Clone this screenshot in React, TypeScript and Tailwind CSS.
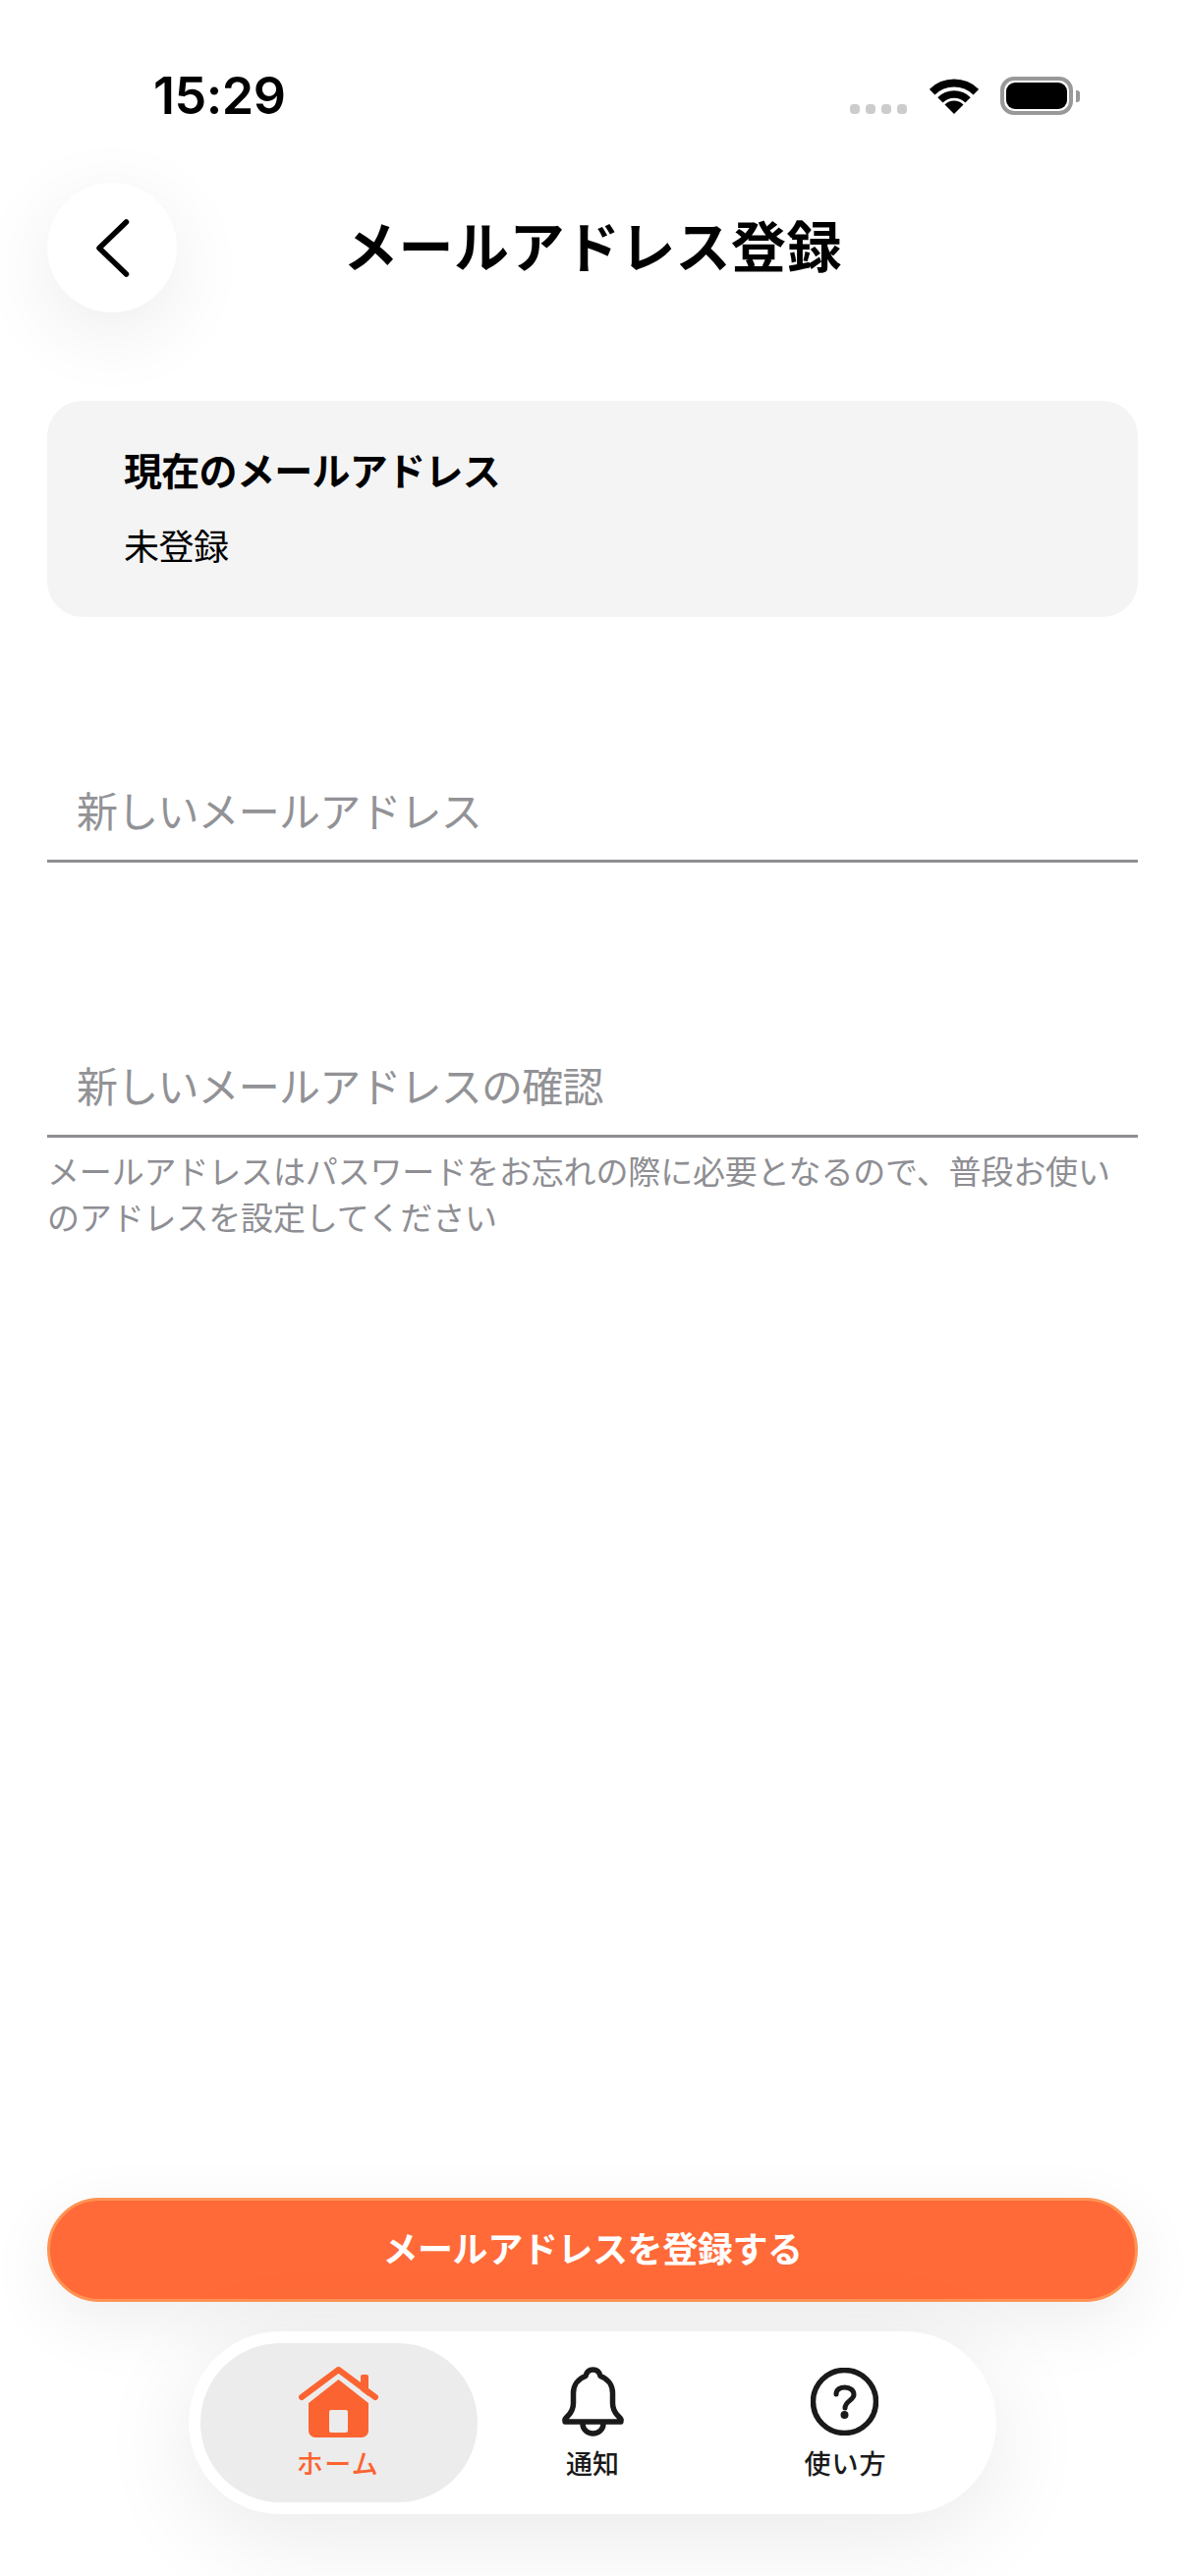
const font = '[font-family:Inter,"Noto_Sans_CJK_JP",sans-serif]';

function StatusBar() {
  return (
    <div className="flex h-[186px] items-start pl-[108px] pr-[59px] pt-[68px]">
      <div className="text-[52px] leading-[60px] font-semibold text-black tracking-[-0.5px]">15:29</div>
      <div className="ml-auto flex h-[39px] mt-[10px] items-end">
        <div className="mb-[1px] flex gap-[6px]">
          <span className="h-[10px] w-[10px] rounded-[4px] bg-[#cccccc]" />
          <span className="h-[10px] w-[10px] rounded-[4px] bg-[#cccccc]" />
          <span className="h-[10px] w-[10px] rounded-[4px] bg-[#cccccc]" />
          <span className="h-[10px] w-[10px] rounded-[4px] bg-[#cccccc]" />
        </div>
        <svg className="ml-[23px] mb-[1px]" width="50" height="37" viewBox="0 0 50 37">
          <path d="M2.6 14.7A32 32 0 0 1 47.4 14.7" fill="none" stroke="#000" strokeWidth="8" />
          <path d="M10.9 22.9A20 20 0 0 1 39.1 22.9" fill="none" stroke="#000" strokeWidth="7.5" />
          <path d="M25 37L15.5 27.5A13.4 13.4 0 0 1 34.5 27.5Z" fill="#000" />
        </svg>
        <div className="ml-[22px] flex items-center">
          <div className="flex h-[39px] w-[74px] items-center justify-center rounded-[14px] border-[4px] border-[#999999]">
            <div className="h-[27px] w-[62px] rounded-[9px] bg-black" />
          </div>
          <div className="ml-[3px] h-[12px] w-[4px] rounded-r-[3px] bg-[#999999]" />
        </div>
      </div>
    </div>
  );
}

function HomeIcon() {
  return (
    <svg width="81" height="72" viewBox="0 0 81 72">
      <path d="M63 24V10a2 2 0 0 1 2-2h4a2 2 0 0 1 2 2v20Z" fill="#fb6431" />
      <path d="M3 31L40.5 3L78 31" fill="none" stroke="#fb6431" strokeWidth="6" strokeLinecap="round" strokeLinejoin="round" />
      <path d="M40.5 13L71 37V65a7 7 0 0 1-7 7H17a7 7 0 0 1-7-7V37Z" fill="#fb6431" />
      <rect x="31" y="44" width="19" height="23" rx="2" fill="#ececec" />
    </svg>
  );
}

function BellIcon() {
  return (
    <svg width="65" height="71" viewBox="0 0 65 71" fill="none" stroke="#1a1a1a" strokeWidth="5.5" strokeLinejoin="round" strokeLinecap="round">
      <path d="M4 56C3 54 4.500 52.500 7 50C10 47 12.500 43 12.500 37V27C12.500 18 18 12 25 9.500C26 5 29 3 32.500 3C36 3 39 5 40 9.500C47 12 52.500 18 52.500 27V37C52.500 43 55 47 58 50C60.500 52.500 62 54 61 56Z" />
      <path d="M22 58C22 64 27 68 32.500 68C38 68 43 64 43 58" />
    </svg>
  );
}

function HelpIcon() {
  return (
    <svg width="69" height="69" viewBox="0 0 69 69" fill="none" stroke="#1a1a1a">
      <circle cx="34.500" cy="34.500" r="32" strokeWidth="5.500" />
      <path d="M26 27C26 22 30 20 35 20C40 20 44 23 44 27.500C44 33 35 34 35 41" strokeWidth="5" strokeLinecap="round" />
      <circle cx="34.500" cy="48" r="4" fill="#1a1a1a" stroke="none" />
    </svg>
  );
}

function Field({ label, top }: { label: string; top: string }) {
  return (
    <div className={`flex h-[100px] items-center border-b-[3px] border-[#8e8e93] pl-[30px] text-[42px] tracking-[-0.8px] text-[#929296] ${top}`}>
      {label}
    </div>
  );
}

export default function App() {
  return (
    <div className={`flex h-[2622px] w-[1206px] flex-col overflow-hidden bg-white px-[48px] ${font}`}>
      <StatusBar />
      <div className="flex h-[132px] items-center">
        <div className="flex h-[132px] w-[132px] items-center justify-center rounded-full bg-white shadow-[0_20px_80px_rgba(0,0,0,0.08)]">
          <svg width="40" height="62" viewBox="0 0 40 62" fill="none" stroke="#000" strokeWidth="5.5" strokeLinecap="round" strokeLinejoin="round">
            <path d="M34.500 5L7 31.500L34.500 58" />
          </svg>
        </div>
        <div className="flex-1 text-center text-[56px] leading-[80px] font-bold tracking-[0.4px] text-black">メールアドレス登録</div>
        <div className="w-[132px]" />
      </div>

      <div className="mt-[90px] flex h-[220px] flex-col rounded-[36px] bg-[#f4f4f4] pl-[78px] pt-[44px]">
        <div className="text-[39px] leading-[56px] font-semibold tracking-[-0.7px] text-black">現在のメールアドレス</div>
        <div className="mt-[22px] text-[36px] leading-[54px] tracking-[-0.5px] text-black">未登録</div>
      </div>

      <Field label="新しいメールアドレス" top="mt-[150px]" />
      <Field label="新しいメールアドレスの確認" top="mt-[180px]" />
      <div className="mt-[12px] text-[33px] leading-[47px] tracking-[-0.15px] text-[#8e8e93]">
        メールアドレスはパスワードをお忘れの際に必要となるので、普段お使いのアドレスを設定してください
      </div>

      <div className="mt-auto flex h-[106px] items-center justify-center rounded-[53px] border-[3px] border-[#ff9354] bg-[#ff6a38] text-[36px] font-semibold tracking-[-0.4px] text-white shadow-[0_20px_70px_rgba(0,0,0,0.07)]">
        メールアドレスを登録する
      </div>

      <div className="mb-[63px] mt-[30px] flex h-[186px] w-[822px] items-center self-center rounded-[93px] bg-white pl-[12px] shadow-[0_20px_100px_rgba(0,0,0,0.09)]">
        <div className="mr-[-12px] flex h-[162px] w-[282px] flex-col items-center rounded-[81px] bg-[#ececec] pt-[24px]">
          <div className="mr-[2px]"><HomeIcon /></div>
          <div className="mr-[2px] mt-[8px] text-[27px] leading-[40px] font-medium tracking-[1.5px] text-[#fb6431]">ホーム</div>
        </div>
        <div className="flex h-[162px] w-[258px] flex-col items-center pt-[24px]">
          <BellIcon />
          <div className="mt-[9px] text-[27px] leading-[40px] font-medium text-[#1a1a1a]">通知</div>
        </div>
        <div className="flex h-[162px] w-[258px] flex-col items-center pt-[25px]">
          <div className="mr-[3px]"><HelpIcon /></div>
          <div className="mr-[1px] mt-[10px] text-[27px] leading-[40px] font-medium tracking-[1px] text-[#1a1a1a]">使い方</div>
        </div>
      </div>
    </div>
  );
}
